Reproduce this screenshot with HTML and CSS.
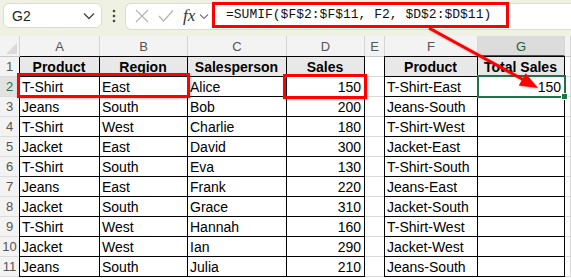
FILE: index.html
```html
<!DOCTYPE html>
<html lang="en">
<head>
  <meta charset="UTF-8">
  <title>SUMIF</title>
  <link rel="stylesheet" href="styles.css">
</head>
<body>

  <div class="toolbar">
    <div class="namebox">
      <span>G2</span>
      <svg width="12" height="8" viewBox="0 0 12 8"><path d="M1 1.5 L6 6.5 L11 1.5" fill="none" stroke="#444" stroke-width="1.3"/></svg>
    </div>
    <div class="grip">
      <svg width="4" height="14" viewBox="0 0 4 14"><circle cx="2" cy="2" r="1.3" fill="#444"/><circle cx="2" cy="7" r="1.3" fill="#444"/><circle cx="2" cy="12" r="1.3" fill="#444"/></svg>
    </div>
    <div class="fbar">
      <div class="fbtns">
        <svg width="14" height="14" viewBox="0 0 14 14"><path d="M1 1 L13 13 M13 1 L1 13" stroke="#b4b4b4" stroke-width="1.2"/></svg>
        <svg width="16" height="14" viewBox="0 0 16 14"><path d="M1 7 L5.5 12 L15 1.5" fill="none" stroke="#b4b4b4" stroke-width="1.2"/></svg>
        <span class="fx">fx</span>
        <svg width="10" height="7" viewBox="0 0 10 7"><path d="M1 1.5 L5 5.5 L9 1.5" fill="none" stroke="#777" stroke-width="1.1"/></svg>
      </div>
      <div class="finput">=SUMIF($F$2:$F$11, F2, $D$2:$D$11)</div>
    </div>
  </div>

  <div class="sheet">
    <div class="corner"></div>
    <div class="ch">A</div><div class="ch">B</div><div class="ch">C</div><div class="ch">D</div>
    <div class="ch">E</div><div class="ch">F</div><div class="ch sel">G</div><div class="ch"></div>

    <div class="rh">1</div>
    <div class="c th tl">Product</div><div class="c th">Region</div><div class="c th">Salesperson</div><div class="c th">Sales</div>
    <div class="c"></div>
    <div class="c th tl">Product</div><div class="c th">Total Sales</div><div class="c"></div>

    <div class="rh sel">2</div>
    <div class="c t tl">T-Shirt</div><div class="c t">East</div><div class="c t">Alice</div><div class="c t n">150</div>
    <div class="c"></div>
    <div class="c t tl">T-Shirt-East</div><div class="c t n">150</div><div class="c"></div>

    <div class="rh">3</div>
    <div class="c t tl">Jeans</div><div class="c t">South</div><div class="c t">Bob</div><div class="c t n">200</div>
    <div class="c"></div>
    <div class="c t tl">Jeans-South</div><div class="c t n"></div><div class="c"></div>

    <div class="rh">4</div>
    <div class="c t tl">T-Shirt</div><div class="c t">West</div><div class="c t">Charlie</div><div class="c t n">180</div>
    <div class="c"></div>
    <div class="c t tl">T-Shirt-West</div><div class="c t n"></div><div class="c"></div>

    <div class="rh">5</div>
    <div class="c t tl">Jacket</div><div class="c t">East</div><div class="c t">David</div><div class="c t n">300</div>
    <div class="c"></div>
    <div class="c t tl">Jacket-East</div><div class="c t n"></div><div class="c"></div>

    <div class="rh">6</div>
    <div class="c t tl">T-Shirt</div><div class="c t">South</div><div class="c t">Eva</div><div class="c t n">130</div>
    <div class="c"></div>
    <div class="c t tl">T-Shirt-South</div><div class="c t n"></div><div class="c"></div>

    <div class="rh">7</div>
    <div class="c t tl">Jeans</div><div class="c t">East</div><div class="c t">Frank</div><div class="c t n">220</div>
    <div class="c"></div>
    <div class="c t tl">Jeans-East</div><div class="c t n"></div><div class="c"></div>

    <div class="rh">8</div>
    <div class="c t tl">Jacket</div><div class="c t">South</div><div class="c t">Grace</div><div class="c t n">310</div>
    <div class="c"></div>
    <div class="c t tl">Jacket-South</div><div class="c t n"></div><div class="c"></div>

    <div class="rh">9</div>
    <div class="c t tl">T-Shirt</div><div class="c t">West</div><div class="c t">Hannah</div><div class="c t n">160</div>
    <div class="c"></div>
    <div class="c t tl">T-Shirt-West</div><div class="c t n"></div><div class="c"></div>

    <div class="rh">10</div>
    <div class="c t tl">Jacket</div><div class="c t">West</div><div class="c t">Ian</div><div class="c t n">290</div>
    <div class="c"></div>
    <div class="c t tl">Jacket-West</div><div class="c t n"></div><div class="c"></div>

    <div class="rh">11</div>
    <div class="c t tl">Jeans</div><div class="c t">South</div><div class="c t">Julia</div><div class="c t n">210</div>
    <div class="c"></div>
    <div class="c t tl">Jeans-South</div><div class="c t n"></div><div class="c"></div>
  </div>

  <!-- annotations on top of the sheet -->
  <div class="mark mark-src"></div>
  <div class="mark mark-val"></div>
  <div class="cursor"><span class="handle"></span></div>

  <svg class="arrow" width="571" height="278" viewBox="0 0 571 278">
    <line x1="429" y1="28" x2="523" y2="79.5" stroke="#f00" stroke-width="3"/>
    <polygon points="538,88 518.8,85.4 525.6,73.2" fill="#f00"/>
  </svg>

</body>
</html>
```

FILE: styles.css
```css
html,
body {
  margin: 0;
  padding: 0;
  width: 571px;
  height: 278px;
  overflow: hidden;
  background-color: #ffffff;
  font-family: "Liberation Sans", Arial, sans-serif;
  position: relative;
}

.toolbar {
  display: flex;
  align-items: flex-start;
  height: 36px;
  padding: 3px 0 0 3px;
  box-sizing: border-box;
  background-color: #eff1e3;
}

.namebox {
  display: flex;
  align-items: center;
  justify-content: space-between;
  width: 99px;
  height: 25px;
  padding: 0 6px 0 8px;
  box-sizing: border-box;
  background-color: white;
  border: 1px solid #dcdcd4;
  border-radius: 6px;
  font-size: 14px;
  color: #222;
}

.grip {
  display: flex;
  align-items: center;
  justify-content: center;
  width: 23px;
  height: 25px;
}

.fbar {
  display: flex;
  flex: 1;
  height: 27px;
  background-color: white;
  border: 1px solid #dcdcd4;
  border-right: 0px;
  border-radius: 6px 0 0 6px;
  box-sizing: border-box;
}

.fbtns {
  display: flex;
  align-items: center;
  gap: 9px;
  width: 86px;
  height: 24px;
  padding-left: 9px;
  box-sizing: border-box;
}

.fx {
  font-family: "Liberation Serif", serif;
  font-style: italic;
  font-size: 17px;
  color: #333;
  margin-right: -5px;
}

.finput {
  width: 297px;
  height: 26px;
  margin-top: -2px;
  padding-left: 11px;
  box-sizing: border-box;
  border: 3px solid #f00;
  font-family: "Liberation Mono", monospace;
  font-size: 13px;
  line-height: 20px;
  color: #111;
  white-space: nowrap;
}

.sheet {
  display: grid;
  grid-template-columns: 20px 80px 88px 99px 78px 20px 93px 87px 1fr;
  grid-template-rows: 21px repeat(11, 20px);
  font-size: 14px;
  color: #000;
}

.sheet > div {
  box-sizing: border-box;
  white-space: nowrap;
  overflow: hidden;
}

.corner {
  background-color: #f3f3f3;
  border-right: 1px solid #d6d6d6;
  border-bottom: 1px solid #c8c8c8;
  position: relative;
}

.corner::after {
  content: "";
  position: absolute;
  right: 2px;
  bottom: 2px;
  border-left: 11px solid transparent;
  border-bottom: 11px solid #dadada;
}

.ch {
  background-color: #f3f3f3;
  border-right: 1px solid #d6d6d6;
  border-bottom: 1px solid #c8c8c8;
  text-align: center;
  font-size: 13px;
  line-height: 21px;
  color: #555;
}

.ch.sel {
  background-color: #dcdcdc;
  border-bottom: 2px solid #217346;
  color: #1e5b37;
}

.rh {
  background-color: #f3f3f3;
  border-right: 1px solid #c8c8c8;
  border-bottom: 1px solid #dcdcdc;
  text-align: center;
  font-size: 13px;
  line-height: 20px;
  color: #555;
}

.rh.sel {
  background-color: #e2e2e2;
  color: #217346;
}

.c {
  border-right: 1px solid #dadada;
  border-bottom: 1px solid #dadada;
  padding: 0 3px 0 2px;
  line-height: 20px;
}

.t,
.th {
  border-right: 1px solid #000;
  border-bottom: 1px solid #000;
}

.t.tl {
  box-shadow: -1px 0 0 #000;
}

.th {
  background-color: #e8e8e8;
  font-weight: bold;
  text-align: center;
  box-shadow: 0 -1px 0 #000;
}

.th.tl {
  box-shadow: -1px 0 0 #000, 0 -1px 0 #000, -1px -1px 0 #000;
}

.n {
  text-align: right;
}

.mark {
  position: absolute;
  border: 3px solid #f00;
  box-sizing: border-box;
  box-shadow: 1px 1px 2px rgba(0, 0, 0, 0.25);
}

.mark-src {
  left: 17px;
  top: 73px;
  width: 173px;
  height: 25px;
}

.mark-val {
  left: 283px;
  top: 74px;
  width: 84px;
  height: 25px;
}

.cursor {
  position: absolute;
  left: 477px;
  top: 75px;
  width: 89px;
  height: 23px;
  border: 2px solid #217346;
  box-sizing: border-box;
}

.handle {
  position: absolute;
  right: -4px;
  bottom: -4px;
  width: 5px;
  height: 5px;
  background-color: #217346;
  border: 1px solid white;
}

.arrow {
  position: absolute;
  left: 0;
  top: 0;
  pointer-events: none;
  filter: drop-shadow(1px 1px 1px rgba(0, 0, 0, 0.3));
}
```
